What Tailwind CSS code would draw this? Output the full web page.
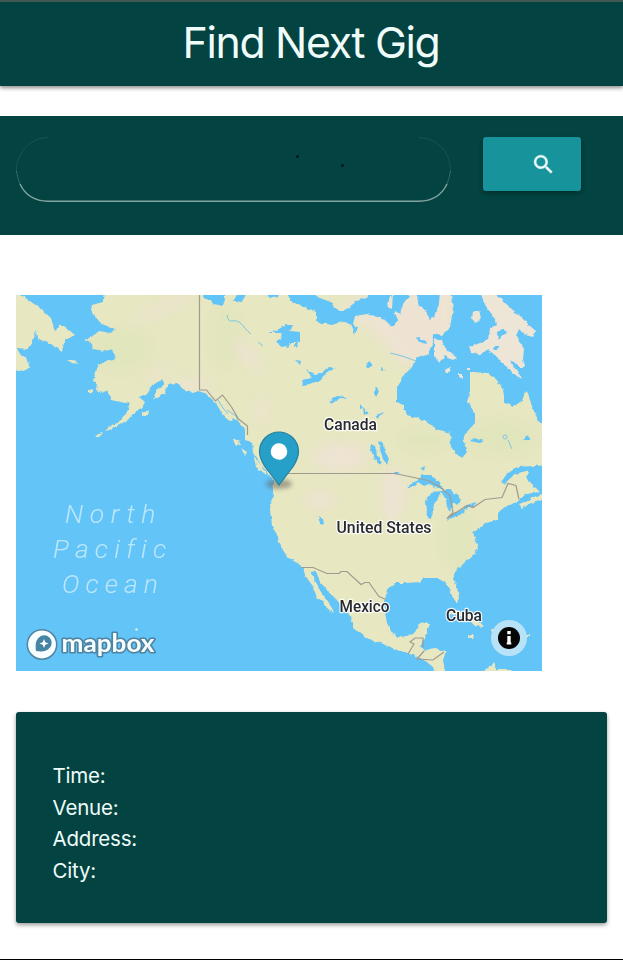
<!DOCTYPE html>
<html lang="en">
<head>
<meta charset="utf-8">
<title>Find Next Gig</title>
<script src="https://cdn.jsdelivr.net/npm/@tailwindcss/browser@4"></script>
</head>
<body class="h-[960px] bg-white font-[Inter,'Liberation_Sans',sans-serif] text-[#effcfa] overflow-hidden">
<div class="flex h-[960px] flex-col border-b border-black">
  <header class="flex h-[86px] shrink-0 items-center justify-center border-t-2 border-[#425953] bg-[#034341] shadow-[0_2px_4px_rgba(0,0,0,0.45)]">
    <h1 class="pr-px pb-[2px] text-[42.800px] leading-[56px] tracking-[-1.320px] whitespace-nowrap">Find Next Gig</h1>
  </header>

  <form class="mt-[30px] flex h-[119px] shrink-0 items-start gap-8 bg-[#034341] px-4 pt-[21px]">
    <div class="relative h-[65px] w-[435px]">
      <span class="absolute top-[18px] left-[280px] size-[3px] rounded-full bg-[#001716]"></span>
      <span class="absolute top-[27px] left-[325px] size-[3px] rounded-full bg-[#001716]"></span>
      <svg class="absolute inset-0 overflow-visible" width="435" height="65" fill="none" stroke="#5c8582"><path stroke-opacity=".35" stroke-width=".7" d="M32 .5A32 32 0 0 0 .5 32v4M403 .5A32 32 0 0 1 434.500 32v4"/><path stroke-opacity=".7" stroke-width=".8" d="M.5 34Q2 43 4 47M434.500 34Q433 43 431 47"/><path stroke="#86a5a2" stroke-width="1.400" d="M4 47Q12 64 32 64.200H403Q423 64 431 47"/></svg>
    </div>
    <button type="button" class="flex h-[54px] w-[98px] items-center justify-end rounded-[3px] bg-[#16939b] pr-[25.500px] shadow-[0_2px_4px_rgba(0,0,0,0.35)]">
      <svg width="25" height="25" viewBox="0 0 24 24" fill="#effcfa" stroke="#effcfa" stroke-width=".4"><path d="M15.500 14h-.79l-.28-.27C15.410 12.590 16 11.110 16 9.500 16 5.910 13.090 3 9.500 3S3 5.910 3 9.500 5.910 16 9.500 16c1.610 0 3.090-.59 4.230-1.570l.27.28v.79l5 4.990L20.490 19l-4.990-5zm-6 0C7.010 14 5 11.990 5 9.500S7.010 5 9.500 5 14 7.010 14 9.500 11.990 14 9.500 14z"/></svg>
    </button>
  </form>

  <section class="mt-[60px] ml-4 h-[376px] w-[526px] shrink-0">
    <svg class="block" width="526" height="376" viewBox="16 295 526 376">
      <defs>
        <filter id="coast" filterUnits="userSpaceOnUse" x="6" y="285" width="546" height="396" color-interpolation-filters="sRGB">
          <feTurbulence type="fractalNoise" baseFrequency=".25" numOctaves="1" seed="7"/>
          <feDisplacementMap in="SourceGraphic" scale="4" xChannelSelector="R" yChannelSelector="G"/>
          <feGaussianBlur stdDeviation=".35"/>
        </filter>
        <filter id="soft" x="-50%" y="-50%" width="200%" height="200%"><feGaussianBlur stdDeviation="6"/></filter>
        <filter id="shade" x="-50%" y="-50%" width="200%" height="200%"><feGaussianBlur stdDeviation="2"/></filter>
        <clipPath id="mainland"><path id="land" d="M104 288L103 302 92 305 91 310 98 320 105 325 116 330 110 333 99 331 93 336 85 340 92 344 93 349 105 351 113 349 115 355 114 360 103 362 99 365 95 372 94 380 97 383 96 390 102 393 107 390 111 400 125 403 130 402 127 412 117 424 125 423 133 414 142 408 145 402 139 397 148 393 152 385 162 380 165 384 157 390 153 398 158 398 165 392 168 384 177 383 183 389 193 393 198 391 205 393 215 402 222 413 228 420 237 423 245 428 245 440 252 443 253 453 260 463 268 473 273 480 273 493 270 510 272 525 278 538 282 548 287 557 297 562 302 568 307 578 312 585 317 597 323 602 327 608 334 613 332 608 325 598 318 587 311 572 316 571 320 582 330 593 337 600 347 613 353 622 353 628 367 638 390 647 398 650 407 653 418 657 427 662 433 667 437 680 447 680 443 660 446 651 437 649 425 650 420 647 425 637 430 623 420 623 415 632 407 636 398 637 392 633 387 623 385 613 385 600 387 590 395 583 407 583 420 582 423 578 437 578 445 582 449 587 453 598 457 603 459 598 457 587 453 578 455 572 465 562 473 555 478 548 476 542 473 532 477 530 485 523 498 520 498 513 503 508 517 502 526 494 540 492 533 485 526 478 530 470 515 474 504 484 501 482 507 474 517 467 550 465 550 430 540 423 533 410 528 393 525 390 523 400 513 407 505 402 503 390 497 380 487 373 470 372 470 390 467 402 475 413 475 423 467 432 463 437 466 450 463 458 457 455 451 447 450 433 437 429 423 420 407 415 403 405 397 402 397 390 402 377 412 367 417 357 427 355 433 343 433 333 442 335 450 327 453 310 450 288Z"/></clipPath>
      </defs>
      <rect x="16" y="295" width="526" height="376" fill="#63c4f7"/>
      <g filter="url(#coast)">
        <use href="#land" fill="#e7e7c2"/>
        <g fill="#e7e7c2">
          <path d="M0 285L24 297 40 308 51 318 55 331 60 324 69 330 75 335 65 340 62 351 53 346 46 341 37 339 36 330 33 342 28 349 17 348 17 351 26 358 30 368 23 371 0 370Z"/>
          <path d="M67 360h5l7 4-7-1zM88 390l5-1v4h-5zM117 426l-8 4-4 1 6-6 10-3zM98 434l5-1-4 4h-4zM88 442l3-1M83 445l-3 2M142 413l7-3-1 5-6 1z"/>
          <path d="M519 504l8-3 9-5 7-1v5l-12 3-9 5z"/>
          <path d="M444 613l12-3 12 4 12 8 4 5-9-1-8-8-12-3zM468 635h6l-1 3h-5zM491 629l11 1 9 5-2 3h-16zM480 672l8-4 7-6v7h12l14 5h-41zM524 635h6v2h-6z"/>
        </g>
        <g fill="#ede5d6">
          <path d="M493 285l2 8 7 7 11 10 7 6 9 9 7 6-3 6-8-2-6-6-3 7 8 13-1 10 2 8-8 0 4 12-8-6-10-10-9-9-6-4-8 4-9-1-2-6 11-4 8-4 2-10 7-5-3-7-7-9-5-10-3-12z"/>
          <path d="M434 338l7 3 6 9 10 8-4 2-8-4-5 7-6-6zM445 370l6-4-1 5-4 2zM459 374l3 0v5l-3-2zM473 311l6-1 2 8-5 5-4-4zM467 368h3v2h-3z"/>
        </g>
      </g>
      <g clip-path="url(#mainland)">
        <g fill="#f0e2d8" filter="url(#soft)" opacity=".75">
          <ellipse cx="161" cy="309" rx="35" ry="4" transform="rotate(-25 161 309)"/>
          <ellipse cx="246" cy="354" rx="6" ry="24" transform="rotate(-45 246 354)"/>
          <ellipse cx="192" cy="386" rx="22" ry="5"/><ellipse cx="158" cy="372" rx="16" ry="3" transform="rotate(-25 158 372)"/>
          <ellipse cx="340" cy="457" rx="28" ry="14"/><ellipse cx="393" cy="495" rx="12" ry="28"/>
          <ellipse cx="262" cy="410" rx="5" ry="14"/>
          <path d="M345 300l110-12v45l-20 25-30 10-30-35-30-20z"/>
          <ellipse cx="320" cy="500" rx="14" ry="8"/>
        </g>
        <g fill="#d6e3ae" filter="url(#soft)" opacity=".3"><ellipse cx="225" cy="335" rx="13" ry="30"/><ellipse cx="460" cy="540" rx="16" ry="30"/><ellipse cx="500" cy="438" rx="35" ry="16"/><ellipse cx="120" cy="350" rx="30" ry="20"/><ellipse cx="425" cy="440" rx="26" ry="10"/></g>
      </g>
      <g filter="url(#coast)" fill="#63c4f7">
        <path d="M200 290h25v8l-2 8-9-2-10-7zM233 301l5-8h9l-6 10zM263 290h17l-2 6-8 2zM287 290h20l13 8 13 5 2 5 6 3 9-3 5-7 12-3 4-8h22l-2 8-4 4 1 6 6 3 4 9-5 6-12-8-14-4-12 2-2 8 4 3-2 8-3-9-8-5-12 4-16-3 0-10-12-5-14-6z"/>
        <path d="M382 305l13 5-2 14-4-5-8 0zM416 291l3 15 7 5 4 9 6-6 3-10 1-15zM405 288l4 8-6 8-3 10-8-5 1-17z"/>
        <path d="M268 333l9-3 9-5 7 0-3 6 10 1 0 10-8 0-4 6-9-2-3-5 6-3-1-5zM297 348l1-7-4 3zM295 360l6 1-1 4zM306 369l10 6 5-2 8-6 7 1-9 4-8 9-10 3-6 2-1-6 10-2zM329 402l7-6 12 1-10 2-7 5zM365 367l4-6 3 3-2 5zM381 367l5 3-5 1zM376 386l3 5-3 6-2-4zM360 404l3 4-3 1zM363 407l5 6-4 3zM383 412l-5 7-1-4zM370 444l5 2 2 9 5 7-2 3-6-7-3-8zM378 441l6 3 1 8 4 6-2 7-4-6z"/>
        <path d="M417 337l10 5-2 2-7-3zM470 441l4-3 10 3-5 2zM523 440l4-5 3 5zM421 468l4-2-1 5zM318 517l5 2 1 5-4-1zM394 472l5 0-1 3-3-1z"/>
        <path d="M407 487l10-7 5-5h9l10 9 2 5-8-2-5-3-7 2-4-4-5 5zM427 518l-1-17 6-9 9-1-3 7-4 6-2 12-2 3zM441 491l9-2 6 5 5 6-4 5-4-3-2 10-4-5-1-7zM447 519l7-6 11-4-1 4-12 5-4 2zM462 509l5-4 9-3-1 4-10 3z"/>
        <path d="M497 332l6-3 4 4-6 3-3 4zM494 346l6 0-3 4-4-1zM509 360l5 2 7 7 3 7-8-6z"/>
        <path d="M232 418l8 4 1 8-7-4z"/>
      </g>
      <g fill="none" stroke="#7cc6e2" stroke-width="1"><path d="M227 315q1 7 5 6t7 1 6 6 6 6M258 342l5 4M508 440l4 9M390 353l12 3 14 5M218 400l5 8 5 6M227 410l9 6 3 9"/><circle cx="505" cy="437" r="2" fill="none"/></g>
      <g fill="#e7e7c2" filter="url(#coast)"><path d="M233 440l6-1 1 6-4 1zM241 448l6 4-2 4zM254 457l8 9 6 10-12-9z"/></g>
      <g fill="none" stroke="#a09b91" stroke-width="1.200">
        <path d="M199.500 295V390h7l4 5 5 6 7-6 9 12 7 12 9 7v9M270 473.500h125l33 7 10 5 12 10 3 17-6 6 20-13 6 2 12-8 17-2 6-14 8 2 3 14M301 567.500l12 0 14 6h12l2-2h6l14 13 4-2h4l10 14 7 3M408 654l6-10-4-2 5-4h8l0 10M424 651l-7 8 16 1 11-8"/>
      </g>
      <ellipse cx="279" cy="484" rx="13" ry="5" fill="#625f56" opacity=".5" filter="url(#shade)"/>
      <path d="M279 485L264.500 466C261.500 461 259.500 457 259.500 451.500a19.500 19.500 0 0 1 39 0C298.500 457 296.500 461 293.500 466Z" fill="#26a0c9" stroke="#28809c" stroke-width="1.200"/>
      <circle cx="279" cy="451.500" r="8.300" fill="#fff"/>
      <g font-family="Roboto,'Liberation Sans',sans-serif" font-size="16" font-weight="500" fill="#282a32" stroke="#fff" stroke-opacity=".85" stroke-width="2.500" paint-order="stroke" stroke-linejoin="round">
        <text x="324" y="429.500" textLength="53" lengthAdjust="spacingAndGlyphs">Canada</text>
        <text x="336.500" y="533" textLength="95" lengthAdjust="spacingAndGlyphs">United States</text>
        <text x="339.500" y="611.500" textLength="50" lengthAdjust="spacingAndGlyphs">Mexico</text>
        <text x="446" y="620.500" textLength="36" lengthAdjust="spacingAndGlyphs">Cuba</text>
      </g>
      <g font-family="Roboto,'Liberation Sans',sans-serif" font-size="26.500" font-style="italic" font-weight="300" fill="#bce7fb" class="[font-variant-ligatures:none]">
        <text x="65" y="523" letter-spacing="6.500">North</text>
        <text x="53" y="558" letter-spacing="6.200">Pacific</text>
        <text x="62" y="593" letter-spacing="6">Ocean</text>
      </g>
      <g stroke="#4f84a2" stroke-width="1.500">
        <circle cx="42" cy="644.500" r="14.700" fill="#f7feff"/>
        <path d="M36 651c-1-7 0-11 3-13.500a7.400 7.400 0 0 1 10.500 10.500C47 651 43 652 36 651Z" fill="#4585a3" stroke="none"/>
        <path d="M44 639l1.300 3.200 3.200 1.300-3.200 1.300-1.300 3.200-1.300-3.200-3.200-1.300 3.200-1.300Z" fill="#fff" stroke="none"/>
        <text x="61.500" y="652" font-family="Lato,'Liberation Sans',sans-serif" font-size="24" font-weight="700" fill="#f7feff" stroke-width="3.200" paint-order="stroke" stroke-linejoin="round" textLength="93" lengthAdjust="spacingAndGlyphs">mapbox</text>
      </g>
      <circle cx="136.500" cy="629.500" r="1.300" fill="#d9efe3"/>
      <circle cx="509" cy="638" r="18" fill="#b8e2f8"/>
      <circle cx="509" cy="638" r="11" fill="#050505"/>
      <path d="M507.300 631h3.400v3.200h-3.400zM507.300 636h3.400v6.500h.6v2h-4.600v-2h.6z" fill="#fff"/>
    </svg>
  </section>

  <section class="mx-4 mt-[41px] flex h-[211px] shrink-0 flex-col rounded-[3px] bg-[#034341] px-[36.500px] pt-[48px] text-[20.500px] leading-[31.600px] tracking-[-0.2px] shadow-[0_2px_4px_rgba(0,0,0,0.4)]">
    <p>Time:</p>
    <p>Venue:</p>
    <p>Address:</p>
    <p>City:</p>
  </section>
</div>
</body>
</html>
